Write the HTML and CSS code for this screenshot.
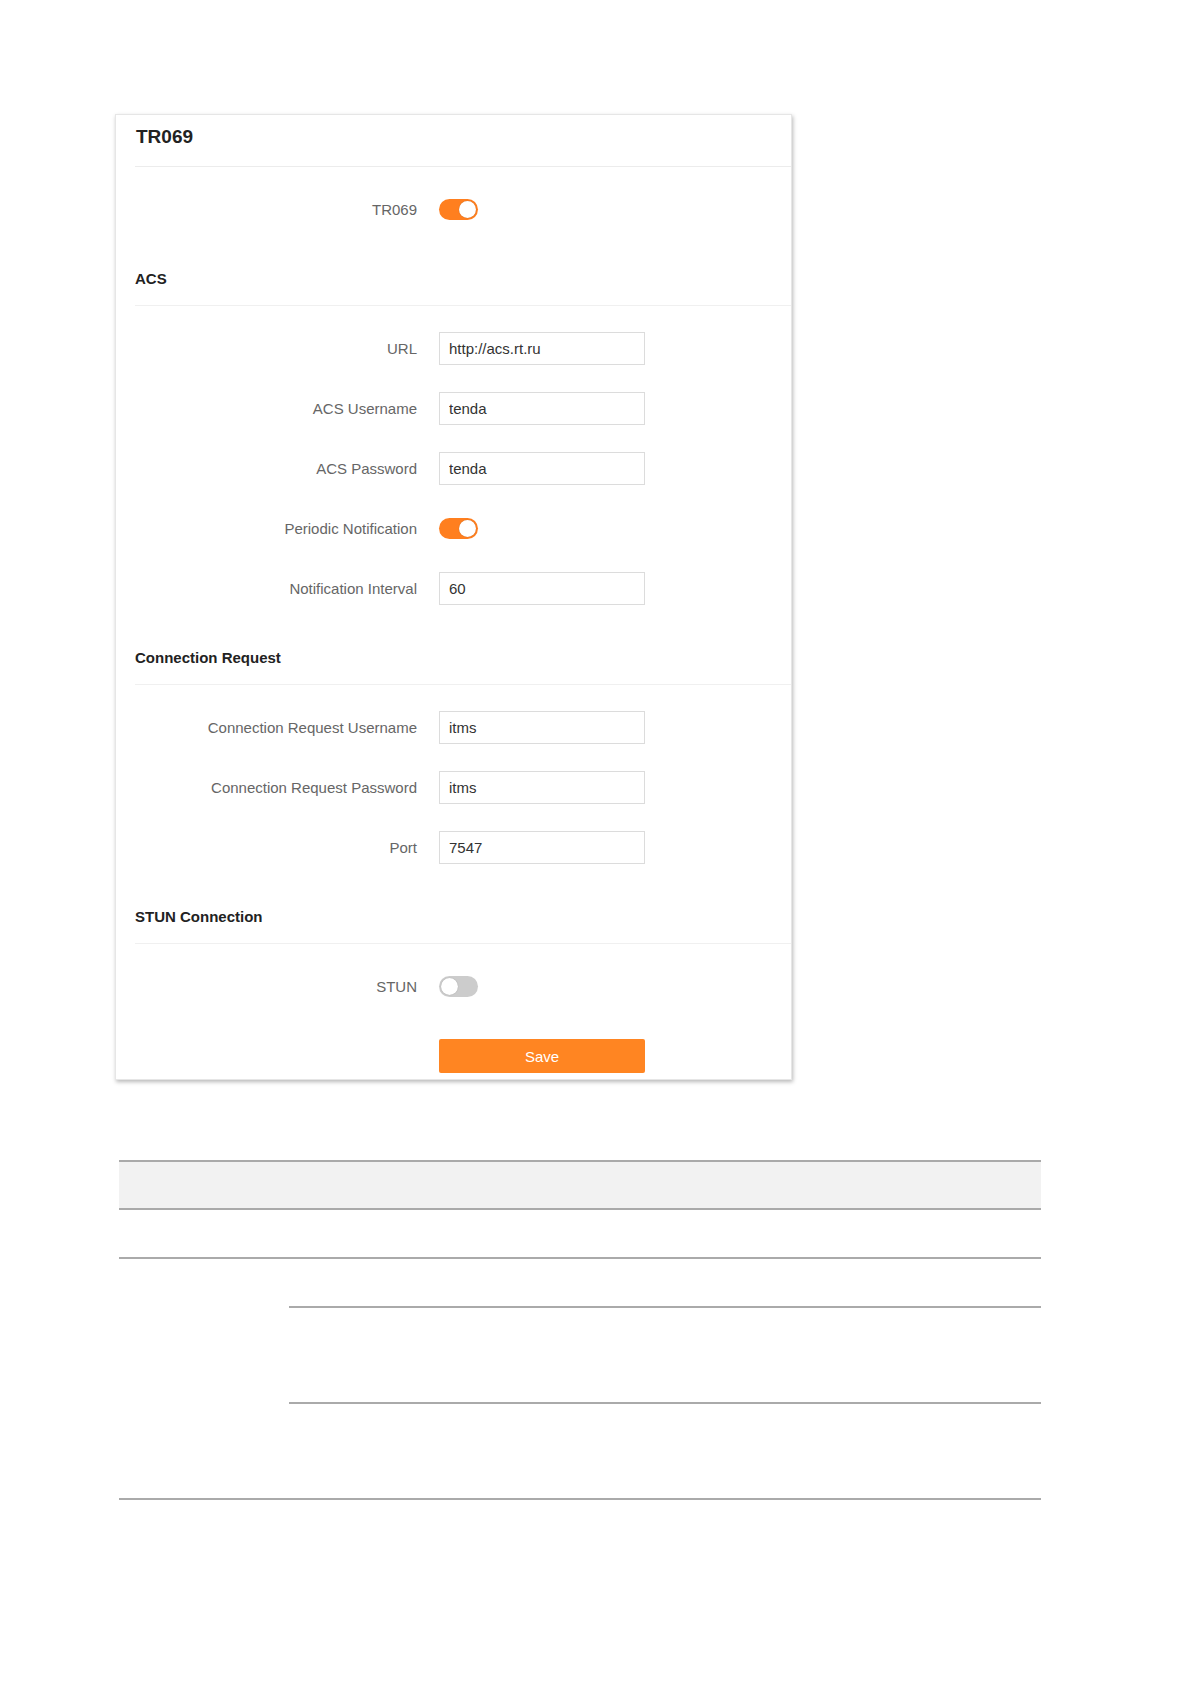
FILE: index.html
```html
<!DOCTYPE html>
<html lang="en">
<head>
    <meta charset="UTF-8">
    <meta name="viewport" content="width=device-width, initial-scale=1.0">
    <title>TR069</title>
    <link rel="stylesheet" href="styles.css">
</head>
<body>
    <!-- Панель настроек TR069 -->
    <div class="card">
        <div class="card-title">TR069</div>

        <div class="group">
            <div class="row">
                <label class="row-label">TR069</label>
                <span class="switch on"></span>
            </div>
        </div>

        <div class="group-title">ACS</div>
        <div class="group">
            <div class="row">
                <label class="row-label" for="url">URL</label>
                <input class="field" type="text" id="url" value="http://acs.rt.ru">
            </div>
            <div class="row">
                <label class="row-label" for="acsUser">ACS Username</label>
                <input class="field" type="text" id="acsUser" value="tenda">
            </div>
            <div class="row">
                <label class="row-label" for="acsPass">ACS Password</label>
                <input class="field" type="text" id="acsPass" value="tenda">
            </div>
            <div class="row">
                <label class="row-label">Periodic Notification</label>
                <span class="switch on"></span>
            </div>
            <div class="row">
                <label class="row-label" for="interval">Notification Interval</label>
                <input class="field" type="text" id="interval" value="60">
            </div>
        </div>

        <div class="group-title">Connection Request</div>
        <div class="group">
            <div class="row">
                <label class="row-label" for="crUser">Connection Request Username</label>
                <input class="field" type="text" id="crUser" value="itms">
            </div>
            <div class="row">
                <label class="row-label" for="crPass">Connection Request Password</label>
                <input class="field" type="text" id="crPass" value="itms">
            </div>
            <div class="row">
                <label class="row-label" for="port">Port</label>
                <input class="field" type="text" id="port" value="7547">
            </div>
        </div>

        <div class="group-title">STUN Connection</div>
        <div class="group">
            <div class="row">
                <label class="row-label">STUN</label>
                <span class="switch"></span>
            </div>
            <div class="row row-save">
                <span class="row-label"></span>
                <button class="btn-save" type="button">Save</button>
            </div>
        </div>
    </div>

    <!-- Таблица параметров -->
    <table class="params">
        <tr class="params-head">
            <td colspan="2"></td>
        </tr>
        <tr class="params-row">
            <td colspan="2"></td>
        </tr>
        <tr class="params-row">
            <td class="params-name" rowspan="3"></td>
            <td></td>
        </tr>
        <tr class="params-tall">
            <td></td>
        </tr>
        <tr class="params-tall">
            <td></td>
        </tr>
    </table>
</body>
</html>
```

FILE: styles.css
```css
body {
    font-family: "Liberation Sans", Arial, sans-serif;
    background-color: #fff;
    color: #333;
    margin: 0;
    padding: 0;
}
.card {
    width: 656px;
    margin: 114px 0 0 115px;
    padding: 0 0 6px 19px;
    background-color: #fff;
    border: 1px solid #e6e6e6;
    box-shadow: 1px 2px 4px rgba(0, 0, 0, 0.28);
}
.card-title {
    font-size: 19px;
    font-weight: bold;
    line-height: 24px;
    color: #222;
    padding: 10px 0 17px 1px;
    border-bottom: 1px solid #ececec;
}
.group-title {
    font-size: 15px;
    font-weight: bold;
    line-height: 20px;
    color: #222;
    padding: 16px 0 16px 0;
    border-bottom: 1px solid #f0f0f0;
}
.group {
    padding-top: 26px;
}
.row {
    display: flex;
    align-items: center;
    height: 33px;
    margin-bottom: 27px;
}
.row-label {
    width: 282px;
    margin-right: 22px;
    text-align: right;
    font-size: 15px;
    color: #666;
}
.field {
    width: 206px;
    height: 33px;
    box-sizing: border-box;
    border: 1px solid #dcdcdc;
    padding: 0 9px;
    font-family: inherit;
    font-size: 15px;
    color: #333;
    outline: none;
}
.switch {
    position: relative;
    width: 39px;
    height: 21px;
    border-radius: 11px;
    background-color: #ccc;
}
.switch::after {
    content: "";
    position: absolute;
    top: 2px;
    left: 2px;
    width: 17px;
    height: 17px;
    border-radius: 50%;
    background-color: #fff;
    box-shadow: 0 0 1px rgba(0, 0, 0, 0.3);
}
.switch.on {
    background-color: #ff7f1f;
}
.switch.on::after {
    left: 20px;
}
.row-save {
    margin: 36px 0 0 0;
    height: 34px;
}
.btn-save {
    width: 206px;
    height: 34px;
    border: none;
    border-radius: 2px;
    background-color: #ff8522;
    color: #fff;
    font-family: inherit;
    font-size: 15px;
    padding: 0;
}
.params {
    width: 922px;
    margin: 80px 0 0 119px;
    border-collapse: collapse;
}
.params td {
    padding: 0;
    border-top: 2px solid #aaa;
    border-bottom: 2px solid #aaa;
}
.params-head td {
    height: 46px;
    background-color: #f2f2f2;
}
.params-row td {
    height: 47px;
}
.params-tall td {
    height: 94px;
}
.params-name {
    width: 170px;
}
```
